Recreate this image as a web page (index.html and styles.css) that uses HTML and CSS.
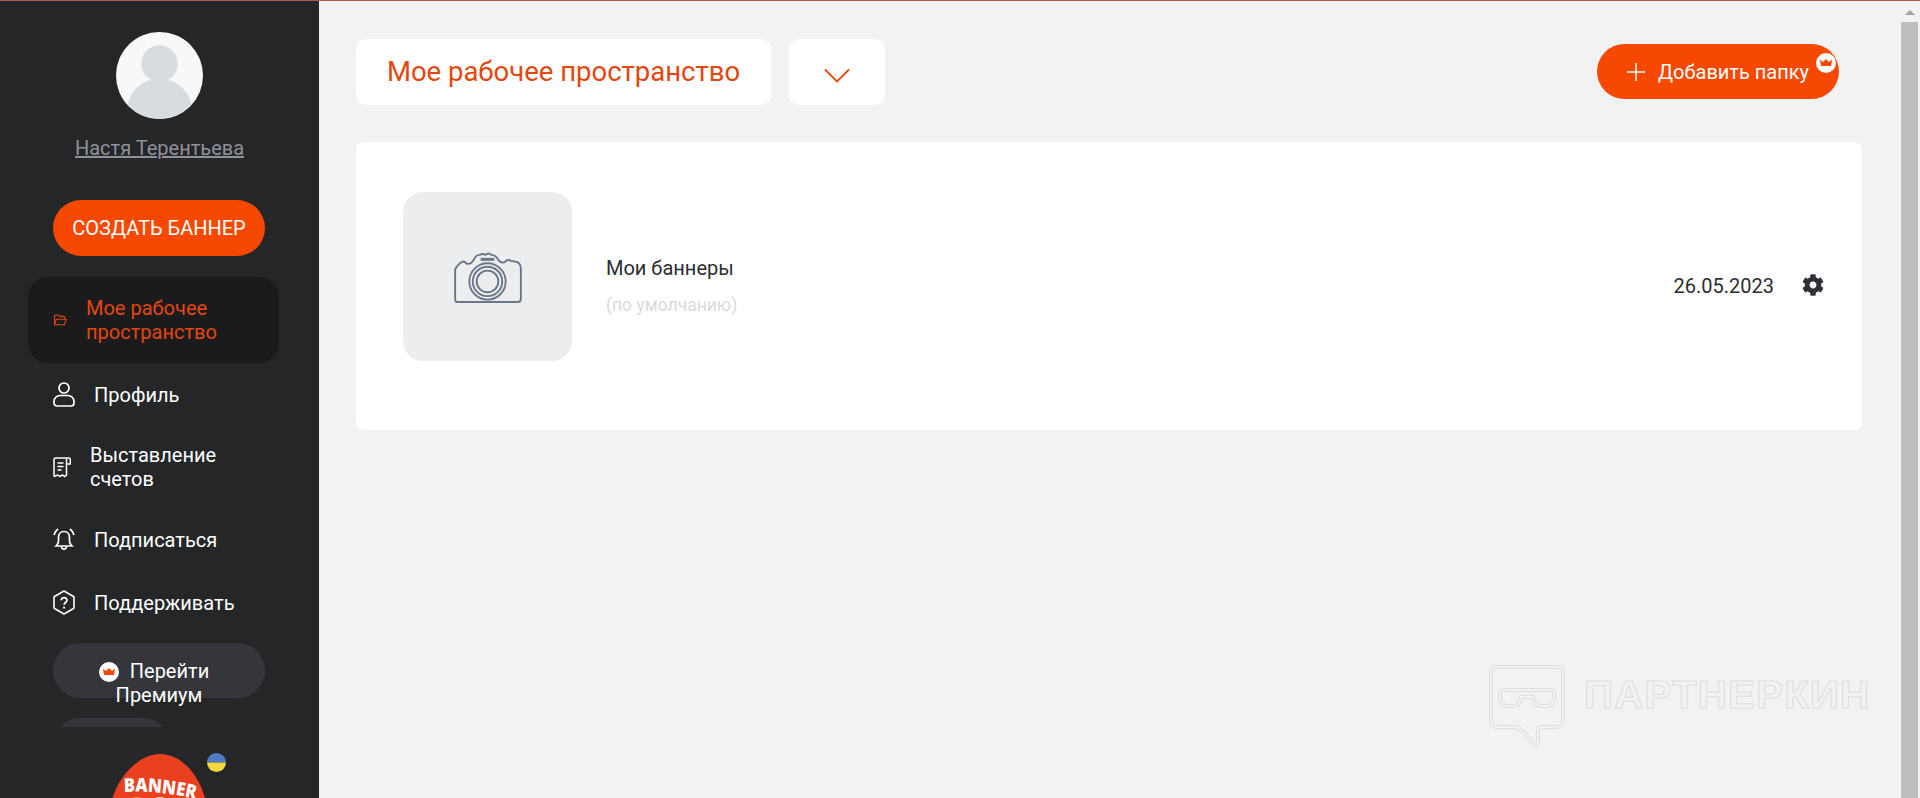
FILE: index.html
```html
<!DOCTYPE html>
<html lang="ru">
<head>
    <meta charset="UTF-8">
    <meta name="viewport" content="width=device-width, initial-scale=1.0">
    <title>Мое рабочее пространство</title>
    <link rel="stylesheet" href="styles.css">
</head>
<body>
    <div class="top-line"></div>
    <div class="app">
        <aside class="sidebar">
            <svg class="avatar" viewBox="0 0 88 88">
                <defs><clipPath id="avatar-clip"><circle cx="44" cy="44" r="44"/></clipPath></defs>
                <circle cx="44" cy="44" r="44" fill="#f7f8f9"/>
                <g clip-path="url(#avatar-clip)" fill="#d9dcdf">
                    <circle cx="44" cy="32" r="18.5"/>
                    <ellipse cx="44" cy="80" rx="33" ry="33"/>
                </g>
            </svg>
            <a class="user-name" href="#">Настя Терентьева</a>
            <a class="create-btn" href="#">СОЗДАТЬ БАННЕР</a>

            <nav class="nav">
                <a class="nav-item active" href="#">
                    <svg class="ico-folder" viewBox="0 0 14 12" fill="none" stroke="currentColor" stroke-width="1.1">
                        <path d="M1.5 10.5V2a1 1 0 0 1 1-1h2.700l1.200 1.400h4.200a1 1 0 0 1 1 1V5"/>
                        <path d="M1.5 10.800 3.300 5.200h9.900l-1.800 5.600z"/>
                    </svg>
                    <span>Мое рабочее пространство</span>
                </a>
                <a class="nav-item" href="#">
                    <svg class="ico" viewBox="0 0 22 25" fill="none" stroke="currentColor" stroke-width="1.7">
                        <circle cx="11" cy="6" r="5"/>
                        <path d="M7 13.500h8a6 6 0 0 1 6 6V21a3 3 0 0 1-3 3H4a3 3 0 0 1-3-3v-1.500a6 6 0 0 1 6-6z"/>
                    </svg>
                    <span class="nav-text">Профиль</span>
                </a>
                <a class="nav-item nav-item-billing" href="#">
                    <svg class="ico-bill" viewBox="0 0 18 21" fill="none" stroke="currentColor" stroke-width="1.5">
                        <path d="M1 19.500V2.500A1.500 1.500 0 0 1 2.500 1H16a1.500 1.500 0 0 1 1.300 1.500V7h-3.800"/>
                        <path d="M13.500 1.500V18l-2 1.500-2-1.500-2.500 1.500-2.500-1.500-3.500 1.500"/>
                        <path d="M4.500 6h6M4.500 9.500h6M4.500 13h4"/>
                    </svg>
                    <span class="nav-text-short">Выставление счетов</span>
                </a>
                <a class="nav-item" href="#">
                    <svg class="ico" viewBox="0 0 22 25" fill="none" stroke="currentColor" stroke-width="1.7">
                        <path d="M11 4.500c-3.500 0-5.500 2.700-5.500 6v4c0 2-1 3-2.500 4.500h16c-1.500-1.500-2.500-2.500-2.500-4.500v-4c0-3.300-2-6-5.500-6z"/>
                        <path d="M8.500 19.500c0 3.500 5 3.500 5 0"/>
                        <path d="M1 8c.5-2.500 2-4.500 4-6M21 8c-.5-2.500-2-4.500-4-6"/>
                    </svg>
                    <span class="nav-text">Подписаться</span>
                </a>
                <a class="nav-item" href="#">
                    <svg class="ico" viewBox="0 0 22 25" fill="none" stroke="currentColor" stroke-width="1.6">
                        <path d="M11 1 20.500 6.500a1 1 0 0 1 .5 1v10a1 1 0 0 1-.5 1L11 24 1.500 18.500a1 1 0 0 1-.5-1v-10a1 1 0 0 1 .5-1z" stroke-linejoin="round"/>
                        <path d="M8.300 10.200c0-3.500 5.600-3.500 5.600 0 0 2.300-2.800 2.200-2.800 4.600" stroke-width="1.800"/>
                        <path d="M11.100 16.700v1.800" stroke-width="2"/>
                    </svg>
                    <span class="nav-text">Поддерживать</span>
                </a>
                <a class="premium-btn" href="#">
                    <svg class="crown-badge" viewBox="0 0 20 20">
                        <circle cx="10" cy="10" r="10" fill="#fff"/>
                        <path d="M4 6.500 7 9l3-3 3 3 3-2.500-1 6.500H5z" fill="#f74800"/>
                    </svg>
                    <span class="premium-first">Перейти</span> Премиум
                </a>
                <div class="extra-pill"></div>
            </nav>

            <div class="logo">
                <svg class="logo-blob" viewBox="0 0 120 60">
                    <path d="M10 60C10 32 35 0 60 0c25 0 45 28 48 60z" fill="#e9401f"/>
                    <path id="logo-arc" d="M24 38Q58 36 96 45" fill="none"/>
                    <text class="logo-text" textLength="72" lengthAdjust="spacingAndGlyphs"><textPath href="#logo-arc">BANNER</textPath></text>
                    <ellipse cx="37" cy="46" rx="7" ry="3" fill="#f59a23"/>
                    <ellipse cx="60" cy="46" rx="7" ry="3" fill="#f6e9df"/>
                </svg>
                <svg class="logo-flag" viewBox="0 0 19 19">
                    <path d="M0 9.500a9.500 9.500 0 0 1 19 0z" fill="#4f7cc4"/>
                    <path d="M0 9.500a9.500 9.500 0 0 0 19 0z" fill="#efd93f"/>
                </svg>
            </div>
        </aside>

        <main class="main">
            <div class="toolbar">
                <div class="workspace-title">Мое рабочее пространство</div>
                <div class="workspace-toggle">
                    <svg class="chevron" viewBox="0 0 26 15" fill="none" stroke="currentColor" stroke-width="1.800">
                        <path d="M1 1.500 13 13.500 25 1.500"/>
                    </svg>
                </div>
                <a class="add-btn" href="#">
                    <svg class="plus" viewBox="0 0 18 18" fill="none" stroke="#fff" stroke-width="1.500">
                        <path d="M9 0v18M0 9h18"/>
                    </svg>
                    Добавить папку
                    <svg class="add-crown" viewBox="0 0 20 20">
                        <circle cx="10" cy="10" r="10" fill="#fff"/>
                        <path d="M4 6.500 7 9l3-3 3 3 3-2.500-1 6.500H5z" fill="#f74800"/>
                    </svg>
                </a>
            </div>

            <section class="folder-card">
                <div class="folder-thumb">
                    <svg class="camera" viewBox="0 0 70 53" fill="none" stroke="#6b7785" stroke-width="1.900">
                        <path d="M4 52H66Q69 52 69 49V18Q69 13 65 11L59 10Q55 8 53 11Q49 13 46 9Q43 4 39 4Q36 1 33 4Q30 2 27 4Q23 4 21 9Q18 14 14 13Q11 10 9 11Q4 14 2 19V49Q2 52 4 52Z"/>
                        <circle cx="35" cy="31" r="18.500"/>
                        <circle cx="35" cy="31" r="15"/>
                        <circle cx="35" cy="31" r="11"/>
                        <path d="M28 8.500H42" stroke-width="3"/>
                    </svg>
                </div>
                <div class="folder-info">
                    <div class="folder-name">Мои баннеры</div>
                    <div class="folder-note">(по умолчанию)</div>
                </div>
                <div class="folder-date">26.05.2023</div>
                <svg class="gear" viewBox="0 0 512 512">
                    <path fill="#2f3036" d="M487.400 315.700l-42.600-24.600c4.300-23.200 4.300-47 0-70.200l42.600-24.600c4.900-2.800 7.100-8.600 5.500-14-11.100-35.600-30-67.800-54.700-94.600-3.800-4.100-10-5.100-14.800-2.300L380.800 110c-17.900-15.400-38.500-27.300-60.800-35.100V25.800c0-5.600-3.900-10.500-9.400-11.700-36.700-8.200-74.300-7.800-109.200 0-5.500 1.200-9.400 6.100-9.400 11.700V75c-22.200 7.900-42.800 19.800-60.800 35.100L88.700 85.500c-4.900-2.800-11-1.900-14.800 2.300-24.700 26.700-43.600 58.900-54.700 94.600-1.700 5.400.6 11.200 5.500 14L67.300 221c-4.300 23.200-4.300 47 0 70.200l-42.600 24.600c-4.900 2.800-7.100 8.600-5.500 14 11.100 35.600 30 67.800 54.700 94.600 3.800 4.100 10 5.100 14.800 2.300l42.600-24.600c17.900 15.400 38.500 27.300 60.800 35.100v49.200c0 5.600 3.900 10.500 9.400 11.700 36.700 8.200 74.300 7.800 109.200 0 5.500-1.200 9.400-6.100 9.400-11.700v-49.200c22.200-7.900 42.800-19.800 60.800-35.100l42.600 24.600c4.900 2.800 11 1.900 14.800-2.300 24.700-26.700 43.600-58.900 54.700-94.600 1.500-5.500-.7-11.300-5.600-14.100zM256 336c-44.100 0-80-35.900-80-80s35.900-80 80-80 80 35.900 80 80-35.900 80-80 80z"/>
                </svg>
            </section>

            <div class="watermark">
                <svg class="watermark-icon" viewBox="0 0 76 82" fill="none">
                    <g stroke="#dedede" stroke-width="4" stroke-linejoin="round">
                        <path d="M8 2H68a6 6 0 0 1 6 6V56a6 6 0 0 1-6 6H52a3 3 0 0 0-3 3V76c0 4-3 4-5 2L31 64a6 6 0 0 0-4-2H8a6 6 0 0 1-6-6V8a6 6 0 0 1 6-6Z"/>
                        <path d="M14 25H62q3 0 3 3v5q0 8-8 8h-5q-7 0-8-9h-12q-1 9-8 9h-5q-8 0-8-8v-5q0-3 3-3Z"/>
                    </g>
                    <g stroke="#f2f2f2" stroke-width="2" stroke-linejoin="round">
                        <path d="M8 2H68a6 6 0 0 1 6 6V56a6 6 0 0 1-6 6H52a3 3 0 0 0-3 3V76c0 4-3 4-5 2L31 64a6 6 0 0 0-4-2H8a6 6 0 0 1-6-6V8a6 6 0 0 1 6-6Z"/>
                        <path d="M14 25H62q3 0 3 3v5q0 8-8 8h-5q-7 0-8-9h-12q-1 9-8 9h-5q-8 0-8-8v-5q0-3 3-3Z"/>
                    </g>
                </svg>
                <span class="watermark-text">ПАРТНЕРКИН</span>
            </div>
        </main>

        <div class="scrollbar">
            <div class="scroll-arrow"></div>
            <div class="scroll-thumb"></div>
        </div>
    </div>
</body>
</html>
```

FILE: styles.css
```css
* {
    box-sizing: border-box;
}
html, body {
    height: 100%;
}
body {
    margin: 0;
    overflow: hidden;
    font-family: Roboto, "Liberation Sans", sans-serif;
    font-size: 20px;
    line-height: 24px;
    background-color: #f2f2f2;
    color: #2b2d31;
}
a {
    color: inherit;
    text-decoration: none;
}
.top-line {
    height: 1px;
    background-color: #b4555a;
}
.app {
    display: flex;
    height: 797px;
}

/* sidebar */
.sidebar {
    width: 319px;
    flex-shrink: 0;
    height: 100%;
    overflow: hidden;
    background-color: #252628;
    display: flex;
    flex-direction: column;
    align-items: center;
}
.avatar {
    width: 87px;
    height: 87px;
    margin-top: 31px;
    flex-shrink: 0;
}
.user-name {
    margin-top: 17px;
    color: #8f9298;
    text-decoration: underline;
    flex-shrink: 0;
}
.create-btn {
    margin: 40px 1px 0 0;
    width: 212px;
    height: 56px;
    flex-shrink: 0;
    border-radius: 28px;
    background-color: #f74800;
    color: #fff;
    display: flex;
    align-items: center;
    justify-content: center;
}
.nav {
    margin-top: 21px;
    width: 100%;
    height: 450px;
    flex-shrink: 0;
    overflow: hidden;
    padding-left: 28px;
}
.nav-item {
    width: 251px;
    display: flex;
    align-items: center;
    padding: 19px 25px;
    color: #fff;
}
.nav-item-billing {
    padding: 17px 25px;
}
.nav-item.active {
    background-color: #1b1b1d;
    border-radius: 20px;
    color: #e4470e;
}
.ico-folder {
    width: 14px;
    height: 12px;
    margin-right: 19px;
    flex-shrink: 0;
}
.ico {
    width: 22px;
    height: 25px;
    margin-right: 19px;
    flex-shrink: 0;
}
.ico-bill {
    width: 18px;
    height: 21px;
    margin-right: 19px;
    flex-shrink: 0;
}
.premium-btn {
    display: block;
    margin: 9px 0 0 25px;
    width: 212px;
    height: 55px;
    padding: 16px 40px 0;
    border-radius: 28px;
    background-color: #34363b;
    color: #fff;
    text-align: center;
}
.premium-first {
    margin-right: 10px;
}
.crown-badge {
    width: 20px;
    height: 20px;
    margin-right: 6px;
    vertical-align: -4px;
}
.extra-pill {
    margin: 20px 0 0 25px;
    width: 117px;
    height: 55px;
    border-radius: 28px;
    background-color: #34363b;
}
.logo {
    position: relative;
    margin-top: 27px;
    width: 120px;
    height: 60px;
    flex-shrink: 0;
}
.logo-blob {
    display: block;
    width: 120px;
    height: 60px;
}
.logo-text {
    font-family: "Open Sans", sans-serif;
    font-weight: 800;
    font-size: 19px;
    fill: #fff;
}
.logo-flag {
    position: absolute;
    left: 107px;
    top: -1px;
    width: 19px;
    height: 19px;
}

/* main area */
.main {
    position: relative;
    flex: 1;
    min-width: 0;
    padding: 38px 39px 0 37px;
}
.toolbar {
    display: flex;
    align-items: center;
    height: 66px;
}
.workspace-title {
    width: 415px;
    height: 66px;
    background-color: #fff;
    border-radius: 10px;
    color: #e4470e;
    font-size: 27.5px;
    line-height: 66px;
    text-align: center;
}
.workspace-toggle {
    margin-left: 18px;
    width: 96px;
    height: 66px;
    background-color: #fff;
    border-radius: 10px;
    color: #e4470e;
    display: flex;
    justify-content: center;
    padding-top: 29px;
}
.chevron {
    width: 26px;
    height: 15px;
}
.add-btn {
    position: relative;
    margin: 0 23px 1px auto;
    width: 242px;
    height: 55px;
    border-radius: 28px;
    background-color: #f74800;
    color: #fff;
    display: flex;
    align-items: center;
    padding-left: 30px;
}
.plus {
    width: 18px;
    height: 18px;
    margin-right: 13px;
}
.add-crown {
    position: absolute;
    right: 3px;
    top: 9px;
    width: 20px;
    height: 20px;
}
.folder-card {
    margin-top: 37px;
    height: 288px;
    background-color: #fff;
    border-radius: 8px;
    display: flex;
    align-items: center;
    padding: 0 38px 0 47px;
}
.folder-thumb {
    width: 169px;
    height: 169px;
    margin-bottom: 19px;
    border-radius: 20px;
    background-color: #ebedef;
    display: flex;
    align-items: center;
    justify-content: center;
}
.camera {
    width: 69px;
    height: 52px;
}
.folder-info {
    margin-left: 34px;
}
.folder-name {
    color: #2b2d31;
}
.folder-note {
    margin-top: 13px;
    font-size: 17.5px;
    color: #d9dadc;
}
.folder-date {
    margin-left: auto;
}
.gear {
    width: 22px;
    height: 22px;
    margin: 0 0 2px 28px;
}

.watermark {
    position: absolute;
    left: 1170px;
    top: 664px;
    display: flex;
    align-items: flex-start;
    gap: 19px;
}
.watermark-icon {
    width: 76px;
    height: 82px;
}
.watermark-text {
    margin-top: 8px;
    font-family: "Liberation Sans", sans-serif;
    font-weight: 700;
    font-size: 38px;
    line-height: 44px;
    color: #f2f2f2;
    -webkit-text-stroke: 1px #dedede;
    letter-spacing: 1px;
    transform: scaleX(1.065);
    transform-origin: left center;
}

/* fake scrollbar */
.scrollbar {
    width: 19px;
    flex-shrink: 0;
    position: relative;
    padding-top: 21px;
}
.scroll-arrow {
    position: absolute;
    left: 4px;
    top: 9px;
    border-left: 5px solid transparent;
    border-right: 5px solid transparent;
    border-bottom: 5px solid #a3a3a3;
}
.scroll-thumb {
    width: 17px;
    height: 100%;
    background-color: #bebebe;
}
```
